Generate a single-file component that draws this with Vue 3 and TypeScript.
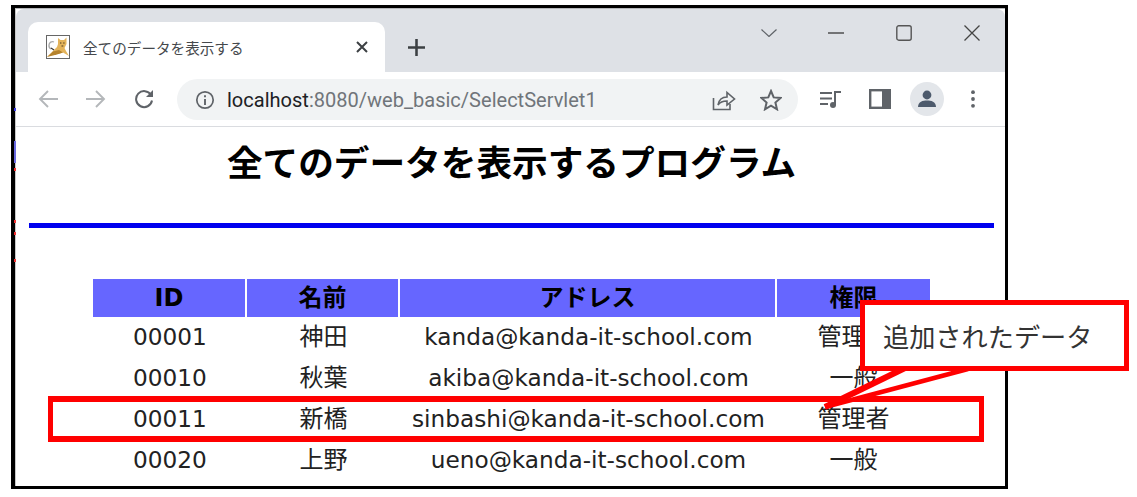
<script setup lang="ts">
interface Row { id: string; name: string; address: string; role: string }
const rows: Row[] = [
  { id: '00001', name: '神田', address: 'kanda@kanda-it-school.com', role: '管理者' },
  { id: '00010', name: '秋葉', address: 'akiba@kanda-it-school.com', role: '一般' },
  { id: '00011', name: '新橋', address: 'sinbashi@kanda-it-school.com', role: '管理者' },
  { id: '00020', name: '上野', address: 'ueno@kanda-it-school.com', role: '一般' },
]
const flecks = [
  { top: 108, h: 3, c: '#3a3ae8' },
  { top: 141, h: 22, c: '#6a6ae0' },
  { top: 168, h: 3, c: '#f03030' },
  { top: 220, h: 3, c: '#f03030' },
  { top: 232, h: 3, c: '#f03030' },
  { top: 259, h: 3, c: '#f03030' },
]
</script>

<template>
  <div class="page">
    <div class="frame">
      <div class="inner">
        <div class="tabstrip">
          <div class="tab">
            <svg class="favicon" viewBox="0 0 24 24" width="24" height="24">
              <rect x="0.5" y="0.5" width="23" height="23" fill="#fff" stroke="#666" />
              <path d="M3 10 a3.5 3.5 0 0 1 5 -3 M3 10 a4 4 0 0 0 2 4" fill="none" stroke="#a8a8a8" stroke-width="1.3" />
              <path d="M1 22 L7 16 L11 12 L12 9 L12 3 L14.5 5 L18 5 L20.5 2.5 L20.5 9 L18.5 13 L20 16 L23 21 L17 17.5 L12 19 L7 18 Z" fill="#e3b35a" />
              <path d="M1 22 L7 16.5 L13 15 L17 17.5 L11 19.5 Z" fill="#b5822c" />
              <path d="M14 8 h1.4 M17.2 8 h1.4 M15.5 11 h1.8" stroke="#4a3a20" stroke-width="1.1" />
              <path d="M5 13 l3 2" stroke="#333" stroke-width="1.1" />
            </svg>
            <span class="tab-title">全てのデータを表示する</span>
            <svg class="tab-close" viewBox="0 0 12 12" width="12" height="12"><path d="M1 1 L11 11 M11 1 L1 11" stroke="#3c4043" stroke-width="2" /></svg>
          </div>
          <svg class="newtab" viewBox="0 0 16 16" width="17" height="17"><path d="M8 0 V16 M0 8 H16" stroke="#3c4043" stroke-width="2.4" /></svg>
          <div class="winctl">
            <svg viewBox="0 0 16 8" width="16" height="8"><path d="M0.5 0.5 L8 7.5 L15.5 0.5" fill="none" stroke="#5f6368" stroke-width="1.2" /></svg>
            <svg viewBox="0 0 16 2" width="16" height="2"><path d="M0 1 H16" stroke="#444" stroke-width="1.4" /></svg>
            <svg viewBox="0 0 16 16" width="16" height="16"><rect x="0.8" y="0.8" width="14.4" height="14.4" rx="2" fill="none" stroke="#555" stroke-width="1.4" /></svg>
            <svg viewBox="0 0 16 16" width="16" height="16"><path d="M0.5 0.5 L15.5 15.5 M15.5 0.5 L0.5 15.5" stroke="#444" stroke-width="1.3" /></svg>
          </div>
        </div>

        <div class="toolbar">
          <svg class="nav" viewBox="0 0 20 20" width="20" height="20"><path d="M20 10 H2 M10 2 L2 10 L10 18" fill="none" stroke="#b4b7ba" stroke-width="1.9" /></svg>
          <svg class="nav" viewBox="0 0 20 20" width="20" height="20"><path d="M0 10 H18 M10 2 L18 10 L10 18" fill="none" stroke="#b4b7ba" stroke-width="1.9" /></svg>
          <svg class="nav" viewBox="0 0 20 20" width="20" height="20"><path d="M17 6 A8 8 0 1 0 18 11.5" fill="none" stroke="#5f6368" stroke-width="2" /><path d="M19 1 V8 H12 Z" fill="#5f6368" /></svg>
          <div class="omnibox">
            <svg viewBox="0 0 20 20" width="20" height="20"><circle cx="10" cy="10" r="8.2" fill="none" stroke="#5f6368" stroke-width="1.7" /><path d="M10 9 V15 M10 5.2 V7.2" stroke="#5f6368" stroke-width="1.9" /></svg>
            <span class="url"><span class="host">localhost</span>:8080/web_basic/SelectServlet1</span>
            <svg class="share" viewBox="0 0 24 22" width="24" height="22"><path d="M1.5 9 V20.5 H18 V15" fill="none" stroke="#5f6368" stroke-width="1.6" /><path d="M6 16 C7 10 11 8 15 8 V3.5 L22.5 10 L15 16 V12 C11 12 8 13 6 16 Z" fill="none" stroke="#5f6368" stroke-width="1.6" /></svg>
            <svg class="star" viewBox="0 0 22 22" width="22" height="22"><path d="M11 2 L13.7 8.4 L20.6 9 L15.4 13.5 L17 20.3 L11 16.7 L5 20.3 L6.6 13.5 L1.4 9 L8.3 8.4 Z" fill="none" stroke="#5f6368" stroke-width="2" /></svg>
          </div>
          <div class="tools">
            <svg viewBox="0 0 24 18" width="24" height="18"><path d="M1 3 H13 M1 8.5 H13 M1 14 H9" stroke="#5f6368" stroke-width="2" /><path d="M16 15 V2 H22" fill="none" stroke="#5f6368" stroke-width="2" /><circle cx="14" cy="15" r="3" fill="#5f6368" /></svg>
            <svg class="panel" viewBox="0 0 22 20" width="22" height="20"><rect x="1.2" y="1.2" width="19.6" height="17.6" fill="none" stroke="#5f6368" stroke-width="2.4" /><rect x="13" y="1" width="8" height="18" fill="#5f6368" /></svg>
            <div class="avatar">
              <svg viewBox="0 0 20 20" width="20" height="20"><circle cx="10" cy="6" r="4.4" fill="#4d5a6c" /><path d="M1 18 C1 12.5 6 11.5 10 11.5 C14 11.5 19 12.5 19 18 Z" fill="#4d5a6c" /></svg>
            </div>
            <svg viewBox="0 0 4 18" width="4" height="18"><circle cx="2" cy="2.2" r="1.9" fill="#5f6368" /><circle cx="2" cy="9" r="1.9" fill="#5f6368" /><circle cx="2" cy="15.8" r="1.9" fill="#5f6368" /></svg>
          </div>
        </div>

        <div class="content">
          <h1>全てのデータを表示するプログラム</h1>
          <hr class="rule" />
          <table>
            <colgroup>
              <col class="c1" /><col class="c2" /><col class="c3" /><col class="c4" />
            </colgroup>
            <thead>
              <tr><th>ID</th><th>名前</th><th>アドレス</th><th>権限</th></tr>
            </thead>
            <tbody>
              <tr v-for="r in rows" :key="r.id">
                <td>{{ r.id }}</td><td class="cjk">{{ r.name }}</td><td>{{ r.address }}</td><td class="cjk">{{ r.role }}</td>
              </tr>
            </tbody>
          </table>
        </div>
      </div>
    </div>

    <span
      v-for="f in flecks"
      :key="f.top"
      class="fleck"
      :style="{ top: f.top + 'px', height: f.h + 'px', background: f.c }"
    ></span>
    <div class="highlight"></div>
    <svg class="tail" viewBox="0 0 160 50" width="160" height="50">
      <path d="M83 4 L3 43 L146 5 Z" fill="#fff" />
      <path d="M83 4 L3 43" fill="none" stroke="#f00" stroke-width="6" />
      <path d="M3 43 L146 5" fill="none" stroke="#f00" stroke-width="4.5" />
    </svg>
    <div class="callout">追加されたデータ</div>
  </div>
</template>

<style>
html, body { margin: 0; background: #fff; }
</style>

<style scoped>
.page {
  position: relative;
  width: 1137px;
  height: 497px;
  overflow: hidden;
  background: #fff;
  padding: 5px 0 0 11px;
  box-sizing: border-box;
  font-family: "DejaVu Sans", "Noto Sans CJK JP", sans-serif;
}
.frame {
  width: 997px;
  height: 484px;
  box-sizing: border-box;
  border: solid #000;
  border-width: 3px 3px 3px 4px;
  overflow: hidden;
  background: #fff;
}
.inner {
  height: 100%;
  box-sizing: border-box;
  border-left: 1px solid #c8c8c8;
  border-top: 1px solid #b4b6b9;
}
.tabstrip {
  height: 63px;
  background: #dee1e6;
  display: flex;
  align-items: flex-end;
  padding-left: 12px;
  border-top-left-radius: 8px;
  border-top-right-radius: 8px;
  position: relative;
}
.tab {
  width: 357px;
  height: 50px;
  box-sizing: border-box;
  background: #fff;
  border-radius: 10px 10px 0 0;
  display: flex;
  align-items: center;
  padding: 0 17px 0 18px;
}
.favicon { flex: none; margin-top: -1px; }
.tab-title {
  margin-left: 13px;
  flex: 1;
  font: 14.6px "Noto Sans CJK JP", sans-serif;
  color: #45484c;
}
.tab-close { flex: none; }
.newtab { margin: 0 0 16px 23px; flex: none; }
.winctl {
  margin-left: auto;
  align-self: flex-start;
  display: flex;
  align-items: center;
  gap: 52px;
  height: 16px;
  margin-top: 16px;
  padding-right: 25px;
}
.winctl svg:first-child { margin-right: -1px; }
.toolbar {
  height: 55px;
  box-sizing: border-box;
  border-bottom: 1px solid #dadce0;
  display: flex;
  align-items: center;
  padding-left: 22px;
  gap: 28px;
}
.nav { flex: none; }
.omnibox {
  width: 621px;
  height: 41px;
  margin-left: -5px;
  margin-top: 1px;
  background: #f1f3f4;
  border-radius: 21px;
  display: flex;
  align-items: center;
  box-sizing: border-box;
  padding: 0 16px 0 18px;
  flex: none;
}
.url {
  margin-left: 12px;
  font: 20.05px "Roboto", sans-serif;
  color: #70757a;
  flex: 1;
  white-space: nowrap;
}
.host { color: #202124; }
.share { margin-right: 24px; }
.tools {
  display: flex;
  align-items: center;
  margin-left: -7px;
  gap: 0;
}
.panel { margin: 0 19px 0 26px; }
.avatar {
  width: 34px;
  height: 34px;
  border-radius: 50%;
  background: #e3e6ea;
  display: flex;
  align-items: center;
  justify-content: center;
  margin-right: 27px;
}
.content { padding: 0 11px 0 13px; }
h1 {
  margin: 12px 0 0;
  text-align: center;
  font: bold 35.65px/44px "Noto Sans CJK JP", sans-serif;
  color: #000;
  height: 52px;
}
.rule {
  margin: 32px 0 0;
  height: 5px;
  border: 0;
  background: #0000ee;
}
table {
  margin: 51px 0 0 64px;
  width: 837px;
  table-layout: fixed;
  border-collapse: separate;
  border-spacing: 0;
  color: #222;
}
.c1 { width: 154px; }
.c2 { width: 153px; }
.c3 { width: 377px; }
.c4 { width: 153px; }
th {
  height: 38px;
  padding: 0;
  background: #6666ff;
  color: #000;
  font-weight: bold;
  font-size: 24px;
  border-right: 2px solid #fff;
  line-height: 1;
}
th:last-child { border-right: 0; }
td {
  height: 41px;
  box-sizing: border-box;
  padding: 0 0 2px;
  text-align: center;
  line-height: 1;
  white-space: nowrap;
  font-size: 23.2px;
}
td.cjk { font-size: 24px; }
.fleck {
  position: absolute;
  left: 14px;
  width: 2px;
}
.highlight {
  position: absolute;
  left: 48px;
  top: 396px;
  width: 936px;
  height: 46px;
  box-sizing: border-box;
  border: solid #f00;
  border-width: 6px 5px;
}
.tail {
  position: absolute;
  left: 822px;
  top: 364px;
}
.callout {
  position: absolute;
  left: 860px;
  top: 300px;
  width: 269px;
  height: 71px;
  box-sizing: border-box;
  border: 5px solid #f00;
  background: #fff;
  padding-left: 18px;
  font: 26.2px/62px "Noto Sans CJK JP", sans-serif;
  color: #333;
  white-space: nowrap;
}
</style>
